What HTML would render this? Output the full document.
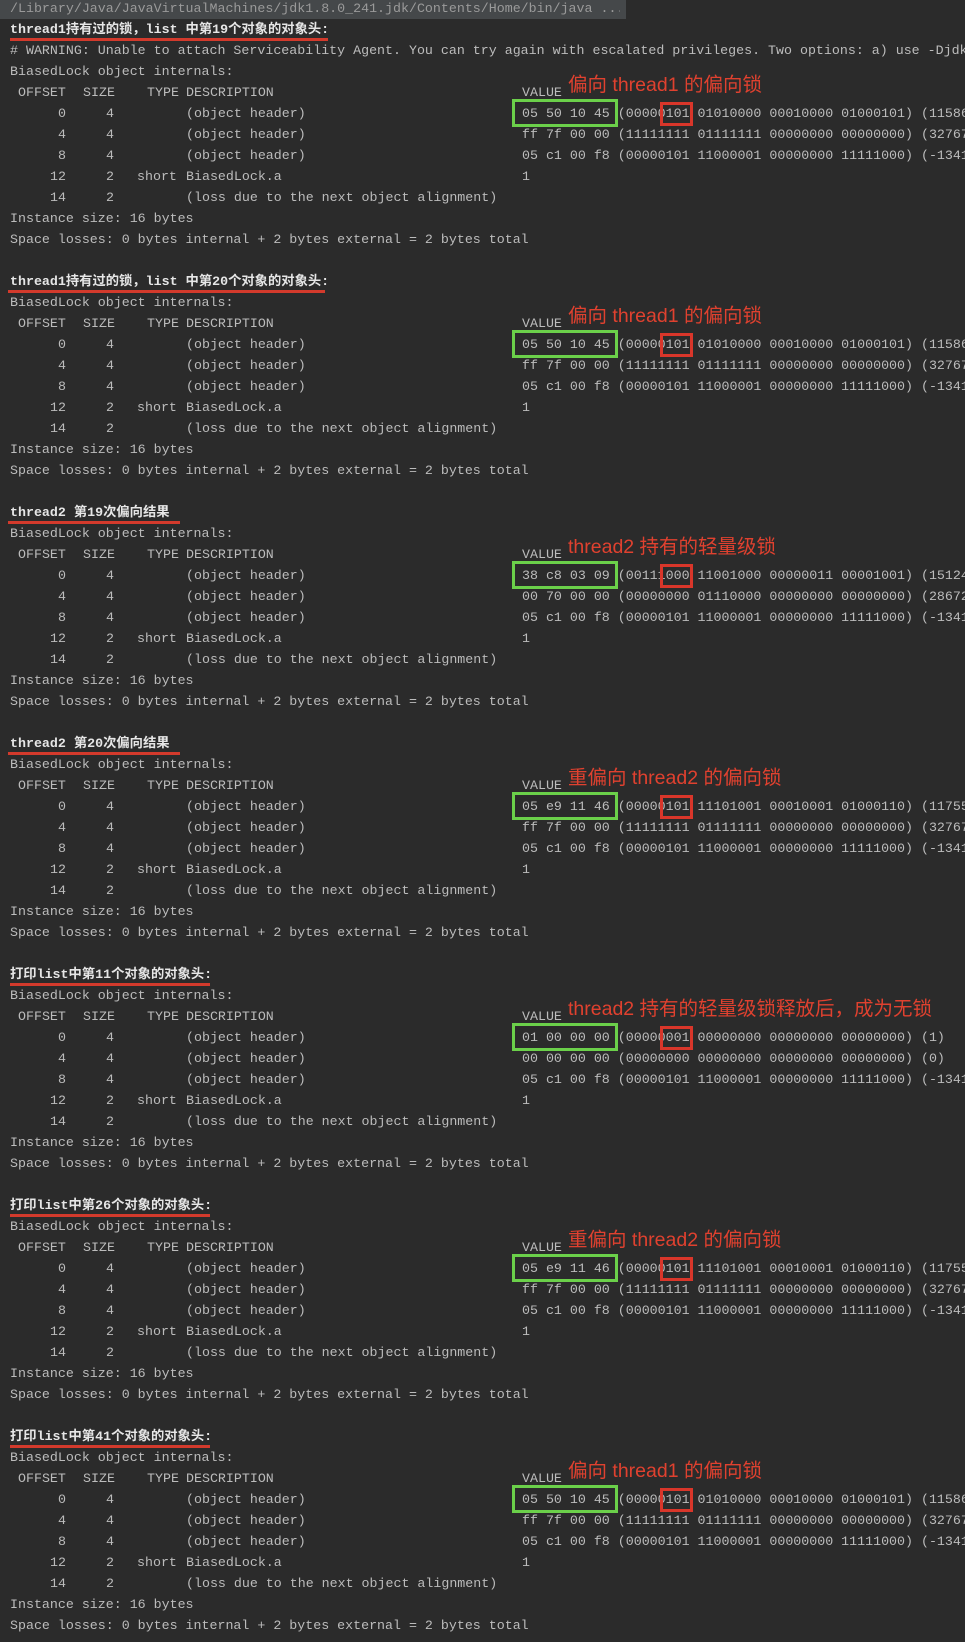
<!DOCTYPE html>
<html><head><meta charset="utf-8">
<style>
html,body{margin:0;padding:0;background:#2b2b2b;width:965px;height:1642px;overflow:hidden;position:relative}
#c{position:absolute;left:0;top:-2.5px;width:965px;height:1645px;overflow:hidden;font-family:"Liberation Mono","Noto Sans CJK SC",monospace;font-size:13.3px;color:#bcbcbc}
.l{position:relative;height:21px;line-height:21px;white-space:pre;padding-left:10px;overflow:hidden}
.l span{position:absolute;top:0;white-space:pre}
.o{left:0;width:66px;text-align:right}
.s{left:0;width:114px;text-align:right}
.ty{left:137px}.d{left:186px}.v{left:522px}
.t{color:#e6e6e6;font-weight:bold}
.bar{position:absolute;left:0;top:0;width:626px;height:19px;background:#45484a}
.path{color:#9a9a9a;width:610px}
.ul{position:absolute;height:3px;background:#d33a2c}
.g{position:absolute;left:512px;width:100px;height:22px;border:3px solid #6bd04a}
.r{position:absolute;left:660px;width:27px;height:18px;border:3px solid #d9362a}
.an{position:absolute;left:568px;height:21px;line-height:21px;font-family:"Liberation Sans","Noto Sans CJK SC",sans-serif;font-size:19.5px;color:#e0412f;white-space:nowrap}
</style></head><body>
<div class="bar"></div>
<div id="c">
<div class="l path">/Library/Java/JavaVirtualMachines/jdk1.8.0_241.jdk/Contents/Home/bin/java ...</div>
<div class="l t">thread1持有过的锁，list 中第19个对象的对象头:</div>
<div class="l"># WARNING: Unable to attach Serviceability Agent. You can try again with escalated privileges. Two options: a) use -Djdk</div>
<div class="l">BiasedLock object internals:</div>
<div class="l"><span style="left:18px">OFFSET</span><span style="left:83px">SIZE</span><span style="left:147px">TYPE</span><span class="d">DESCRIPTION</span><span class="v">VALUE</span></div>
<div class="l"><span class="o">0</span><span class="s">4</span><span class="d">(object header)</span><span class="v">05 50 10 45 (00000101 01010000 00010000 01000101) (1158697029)</span></div>
<div class="l"><span class="o">4</span><span class="s">4</span><span class="d">(object header)</span><span class="v">ff 7f 00 00 (11111111 01111111 00000000 00000000) (32767)</span></div>
<div class="l"><span class="o">8</span><span class="s">4</span><span class="d">(object header)</span><span class="v">05 c1 00 f8 (00000101 11000001 00000000 11111000) (-134168315)</span></div>
<div class="l"><span class="o">12</span><span class="s">2</span><span class="ty">short</span><span class="d">BiasedLock.a</span><span class="v">1</span></div>
<div class="l"><span class="o">14</span><span class="s">2</span><span class="d">(loss due to the next object alignment)</span></div>
<div class="l">Instance size: 16 bytes</div>
<div class="l">Space losses: 0 bytes internal + 2 bytes external = 2 bytes total</div>
<div class="l"></div>

<div class="l t">thread1持有过的锁，list 中第20个对象的对象头:</div>
<div class="l">BiasedLock object internals:</div>
<div class="l"><span style="left:18px">OFFSET</span><span style="left:83px">SIZE</span><span style="left:147px">TYPE</span><span class="d">DESCRIPTION</span><span class="v">VALUE</span></div>
<div class="l"><span class="o">0</span><span class="s">4</span><span class="d">(object header)</span><span class="v">05 50 10 45 (00000101 01010000 00010000 01000101) (1158697029)</span></div>
<div class="l"><span class="o">4</span><span class="s">4</span><span class="d">(object header)</span><span class="v">ff 7f 00 00 (11111111 01111111 00000000 00000000) (32767)</span></div>
<div class="l"><span class="o">8</span><span class="s">4</span><span class="d">(object header)</span><span class="v">05 c1 00 f8 (00000101 11000001 00000000 11111000) (-134168315)</span></div>
<div class="l"><span class="o">12</span><span class="s">2</span><span class="ty">short</span><span class="d">BiasedLock.a</span><span class="v">1</span></div>
<div class="l"><span class="o">14</span><span class="s">2</span><span class="d">(loss due to the next object alignment)</span></div>
<div class="l">Instance size: 16 bytes</div>
<div class="l">Space losses: 0 bytes internal + 2 bytes external = 2 bytes total</div>
<div class="l"></div>

<div class="l t">thread2 第19次偏向结果</div>
<div class="l">BiasedLock object internals:</div>
<div class="l"><span style="left:18px">OFFSET</span><span style="left:83px">SIZE</span><span style="left:147px">TYPE</span><span class="d">DESCRIPTION</span><span class="v">VALUE</span></div>
<div class="l"><span class="o">0</span><span class="s">4</span><span class="d">(object header)</span><span class="v">38 c8 03 09 (00111000 11001000 00000011 00001001) (151242808)</span></div>
<div class="l"><span class="o">4</span><span class="s">4</span><span class="d">(object header)</span><span class="v">00 70 00 00 (00000000 01110000 00000000 00000000) (28672)</span></div>
<div class="l"><span class="o">8</span><span class="s">4</span><span class="d">(object header)</span><span class="v">05 c1 00 f8 (00000101 11000001 00000000 11111000) (-134168315)</span></div>
<div class="l"><span class="o">12</span><span class="s">2</span><span class="ty">short</span><span class="d">BiasedLock.a</span><span class="v">1</span></div>
<div class="l"><span class="o">14</span><span class="s">2</span><span class="d">(loss due to the next object alignment)</span></div>
<div class="l">Instance size: 16 bytes</div>
<div class="l">Space losses: 0 bytes internal + 2 bytes external = 2 bytes total</div>
<div class="l"></div>

<div class="l t">thread2 第20次偏向结果</div>
<div class="l">BiasedLock object internals:</div>
<div class="l"><span style="left:18px">OFFSET</span><span style="left:83px">SIZE</span><span style="left:147px">TYPE</span><span class="d">DESCRIPTION</span><span class="v">VALUE</span></div>
<div class="l"><span class="o">0</span><span class="s">4</span><span class="d">(object header)</span><span class="v">05 e9 11 46 (00000101 11101001 00010001 01000110) (1175578885)</span></div>
<div class="l"><span class="o">4</span><span class="s">4</span><span class="d">(object header)</span><span class="v">ff 7f 00 00 (11111111 01111111 00000000 00000000) (32767)</span></div>
<div class="l"><span class="o">8</span><span class="s">4</span><span class="d">(object header)</span><span class="v">05 c1 00 f8 (00000101 11000001 00000000 11111000) (-134168315)</span></div>
<div class="l"><span class="o">12</span><span class="s">2</span><span class="ty">short</span><span class="d">BiasedLock.a</span><span class="v">1</span></div>
<div class="l"><span class="o">14</span><span class="s">2</span><span class="d">(loss due to the next object alignment)</span></div>
<div class="l">Instance size: 16 bytes</div>
<div class="l">Space losses: 0 bytes internal + 2 bytes external = 2 bytes total</div>
<div class="l"></div>

<div class="l t">打印list中第11个对象的对象头:</div>
<div class="l">BiasedLock object internals:</div>
<div class="l"><span style="left:18px">OFFSET</span><span style="left:83px">SIZE</span><span style="left:147px">TYPE</span><span class="d">DESCRIPTION</span><span class="v">VALUE</span></div>
<div class="l"><span class="o">0</span><span class="s">4</span><span class="d">(object header)</span><span class="v">01 00 00 00 (00000001 00000000 00000000 00000000) (1)</span></div>
<div class="l"><span class="o">4</span><span class="s">4</span><span class="d">(object header)</span><span class="v">00 00 00 00 (00000000 00000000 00000000 00000000) (0)</span></div>
<div class="l"><span class="o">8</span><span class="s">4</span><span class="d">(object header)</span><span class="v">05 c1 00 f8 (00000101 11000001 00000000 11111000) (-134168315)</span></div>
<div class="l"><span class="o">12</span><span class="s">2</span><span class="ty">short</span><span class="d">BiasedLock.a</span><span class="v">1</span></div>
<div class="l"><span class="o">14</span><span class="s">2</span><span class="d">(loss due to the next object alignment)</span></div>
<div class="l">Instance size: 16 bytes</div>
<div class="l">Space losses: 0 bytes internal + 2 bytes external = 2 bytes total</div>
<div class="l"></div>

<div class="l t">打印list中第26个对象的对象头:</div>
<div class="l">BiasedLock object internals:</div>
<div class="l"><span style="left:18px">OFFSET</span><span style="left:83px">SIZE</span><span style="left:147px">TYPE</span><span class="d">DESCRIPTION</span><span class="v">VALUE</span></div>
<div class="l"><span class="o">0</span><span class="s">4</span><span class="d">(object header)</span><span class="v">05 e9 11 46 (00000101 11101001 00010001 01000110) (1175578885)</span></div>
<div class="l"><span class="o">4</span><span class="s">4</span><span class="d">(object header)</span><span class="v">ff 7f 00 00 (11111111 01111111 00000000 00000000) (32767)</span></div>
<div class="l"><span class="o">8</span><span class="s">4</span><span class="d">(object header)</span><span class="v">05 c1 00 f8 (00000101 11000001 00000000 11111000) (-134168315)</span></div>
<div class="l"><span class="o">12</span><span class="s">2</span><span class="ty">short</span><span class="d">BiasedLock.a</span><span class="v">1</span></div>
<div class="l"><span class="o">14</span><span class="s">2</span><span class="d">(loss due to the next object alignment)</span></div>
<div class="l">Instance size: 16 bytes</div>
<div class="l">Space losses: 0 bytes internal + 2 bytes external = 2 bytes total</div>
<div class="l"></div>

<div class="l t">打印list中第41个对象的对象头:</div>
<div class="l">BiasedLock object internals:</div>
<div class="l"><span style="left:18px">OFFSET</span><span style="left:83px">SIZE</span><span style="left:147px">TYPE</span><span class="d">DESCRIPTION</span><span class="v">VALUE</span></div>
<div class="l"><span class="o">0</span><span class="s">4</span><span class="d">(object header)</span><span class="v">05 50 10 45 (00000101 01010000 00010000 01000101) (1158697029)</span></div>
<div class="l"><span class="o">4</span><span class="s">4</span><span class="d">(object header)</span><span class="v">ff 7f 00 00 (11111111 01111111 00000000 00000000) (32767)</span></div>
<div class="l"><span class="o">8</span><span class="s">4</span><span class="d">(object header)</span><span class="v">05 c1 00 f8 (00000101 11000001 00000000 11111000) (-134168315)</span></div>
<div class="l"><span class="o">12</span><span class="s">2</span><span class="ty">short</span><span class="d">BiasedLock.a</span><span class="v">1</span></div>
<div class="l"><span class="o">14</span><span class="s">2</span><span class="d">(loss due to the next object alignment)</span></div>
<div class="l">Instance size: 16 bytes</div>
<div class="l">Space losses: 0 bytes internal + 2 bytes external = 2 bytes total</div>
</div>

<div class="ul" style="left:10px;top:38px;width:318px"></div>
<div class="ul" style="left:8px;top:290px;width:317px"></div>
<div class="ul" style="left:8px;top:521px;width:172px"></div>
<div class="ul" style="left:8px;top:752px;width:172px"></div>
<div class="ul" style="left:10px;top:983px;width:200px"></div>
<div class="ul" style="left:10px;top:1214px;width:200px"></div>
<div class="ul" style="left:10px;top:1445px;width:200px"></div>

<div class="an" style="top:75px">偏向 thread1 的偏向锁</div>
<div class="g" style="top:99px"></div><div class="r" style="top:102px"></div>

<div class="an" style="top:306px">偏向 thread1 的偏向锁</div>
<div class="g" style="top:330px"></div><div class="r" style="top:333px"></div>

<div class="an" style="top:537px">thread2 持有的轻量级锁</div>
<div class="g" style="top:561px"></div><div class="r" style="top:564px"></div>

<div class="an" style="top:768px">重偏向 thread2 的偏向锁</div>
<div class="g" style="top:792px"></div><div class="r" style="top:795px"></div>

<div class="an" style="top:999px">thread2 持有的轻量级锁释放后，成为无锁</div>
<div class="g" style="top:1023px"></div><div class="r" style="top:1026px"></div>

<div class="an" style="top:1230px">重偏向 thread2 的偏向锁</div>
<div class="g" style="top:1254px"></div><div class="r" style="top:1257px"></div>

<div class="an" style="top:1461px">偏向 thread1 的偏向锁</div>
<div class="g" style="top:1485px"></div><div class="r" style="top:1488px"></div>
</body></html>
